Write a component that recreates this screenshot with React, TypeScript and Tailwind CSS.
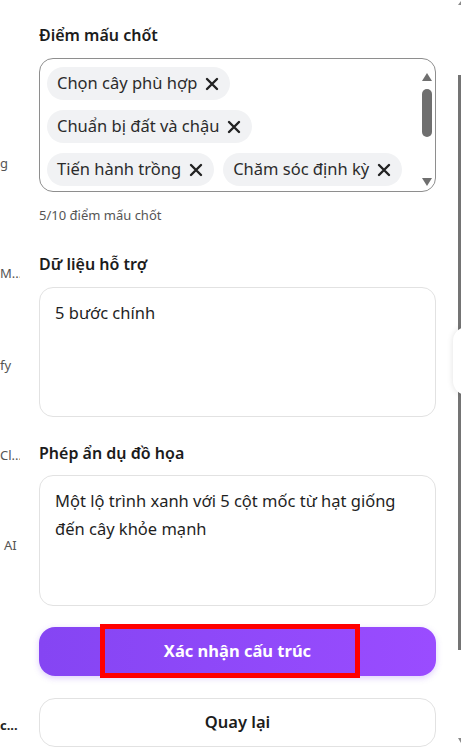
const keyPoints = [
  "Chọn cây phù hợp",
  "Chuẩn bị đất và chậu",
  "Tiến hành trồng",
  "Chăm sóc định kỳ",
  "Thu hoạch và tận hưởng",
];

// sidebar entries, clipped by the narrow rail on the left
const sideItems = [
  { text: "g", top: "mt-[153px]", cls: "pl-0" },
  { text: "M...", top: "mt-[90px]", cls: "pl-0" },
  { text: "fy", top: "mt-[72px]", cls: "pl-0" },
  { text: "Cl...", top: "mt-[70px]", cls: "pl-0" },
  { text: "AI", top: "mt-[70px]", cls: "pl-[4px]" },
];

function SideRail() {
  return (
    <aside className="w-[20px] shrink-0 overflow-hidden flex flex-col text-[13px] leading-[20px] text-[#555]">
      {sideItems.map((item) => (
        <div key={item.text} className={`${item.top} ${item.cls} whitespace-nowrap`}>
          {item.text}
        </div>
      ))}
      <div className="mt-[160px] whitespace-nowrap font-bold text-[#222]">c...</div>
    </aside>
  );
}

function CloseGlyph() {
  return (
    <svg width="14" height="14" viewBox="0 0 14 14" className="shrink-0">
      <path d="M2 2 12 12M12 2 2 12" stroke="#222" strokeWidth="2.4" strokeLinecap="round" fill="none" />
    </svg>
  );
}

function Tag({ label }: { label: string }) {
  return (
    <span className="flex items-center gap-[8px] h-[33px] pl-[10px] pr-[11px] rounded-full bg-[#f1f2f4] text-[16.5px] text-[#2b2b2b] whitespace-nowrap">
      {label}
      <CloseGlyph />
    </span>
  );
}

// classic scrollbar drawn beside the tag list
function TagScrollbar() {
  return (
    <div className="w-[16px] shrink-0 flex flex-col items-center pt-[14px]">
      <svg width="10" height="8" viewBox="0 0 10 8">
        <path d="M5 0 10 8H0Z" fill="#6f6f6f" />
      </svg>
      <div className="mt-[8px] h-[48px] w-[10px] rounded-full bg-[#6f6f6f]" />
      <svg width="10" height="8" viewBox="0 0 10 8" className="mt-[41px]">
        <path d="M0 0H10L5 8Z" fill="#6f6f6f" />
      </svg>
    </div>
  );
}

function FieldLabel({ children }: { children: string }) {
  return <h3 className="text-[16px] leading-[24px] font-semibold text-[#1c1c1c]">{children}</h3>;
}

export default function App() {
  return (
    <div
      className="w-[461px] h-[747px] overflow-hidden flex bg-white"
      style={{ fontFamily: '"Noto Sans", "Open Sans", sans-serif' }}
    >
      <SideRail />

      <main className="ml-[19px] w-[397px] shrink-0 flex flex-col">
        {/* tail of the field above */}
        <div className="h-[16px] mt-[-14px] border-x border-b border-[#e2e2e2] rounded-b-[14px]" />

        <div className="mt-[23px]">
          <FieldLabel>Điểm mấu chốt</FieldLabel>
        </div>
        <div className="mt-[11px] h-[134px] shrink-0 border border-[#8e8e8e] rounded-[14px] flex overflow-hidden">
          <div className="flex-1 overflow-hidden pl-[7px] pt-[8px]">
            <div className="flex flex-wrap content-start gap-x-[9px] gap-y-[10px]">
              {keyPoints.map((p) => (
                <Tag key={p} label={p} />
              ))}
            </div>
          </div>
          <TagScrollbar />
        </div>
        <p className="mt-[13px] text-[13px] leading-[20px] text-[#555]">5/10 điểm mấu chốt</p>

        <div className="mt-[27px]">
          <FieldLabel>Dữ liệu hỗ trợ</FieldLabel>
        </div>
        <textarea
          readOnly
          value="5 bước chính"
          className="mt-[11px] h-[130px] shrink-0 resize-none border border-[#e2e2e2] rounded-[14px] px-[15px] py-[11px] text-[16.5px] leading-[28px] text-[#1f1f1f] outline-none"
        />

        <div className="mt-[24px]">
          <FieldLabel>Phép ẩn dụ đồ họa</FieldLabel>
        </div>
        <textarea
          readOnly
          value="Một lộ trình xanh với 5 cột mốc từ hạt giống đến cây khỏe mạnh"
          className="mt-[10px] h-[131px] shrink-0 resize-none border border-[#e2e2e2] rounded-[14px] pl-[15px] pr-[24px] py-[11px] text-[16.5px] leading-[28px] text-[#1f1f1f] outline-none"
        />

        <button className="relative mt-[21px] h-[49px] shrink-0 rounded-[16px] bg-gradient-to-r from-[#8545f3] to-[#9a4cff] shadow-[0_2px_6px_rgba(120,60,240,0.25)] text-white text-[16.5px] font-bold flex items-center justify-center">
          Xác nhận cấu trúc
          <span className="absolute left-[61px] top-[-3px] w-[260px] h-[54px] border-[5px] border-[#ff0000]" />
        </button>

        <button className="mt-[22px] h-[49px] shrink-0 rounded-[16px] border border-[#e2e2e2] bg-white text-[16.5px] font-semibold text-[#1c1c1c] flex items-center justify-center">
          Quay lại
        </button>
      </main>

      {/* right rail: floating handle and the edge of the page scrollbar */}
      <div className="relative flex-1 flex justify-end">
        <div className="absolute left-[17px] top-[327px] w-[20px] h-[68px] rounded-l-[14px] bg-white shadow-[0_0_6px_rgba(0,0,0,0.12)]" />
        <div className="w-[3px] flex flex-col items-center">
          <div className="mt-[1px] h-[4px] w-[3px] bg-[#8a8a8a] [clip-path:polygon(100%_0,100%_100%,0_100%)]" />
          <div className="mt-[70px] h-[575px] w-[3px] bg-[#747474]" />
          <div className="mt-[88px] h-[5px] w-[3px] bg-[#8a8a8a] [clip-path:polygon(0_0,100%_0,100%_100%)]" />
        </div>
      </div>
    </div>
  );
}
